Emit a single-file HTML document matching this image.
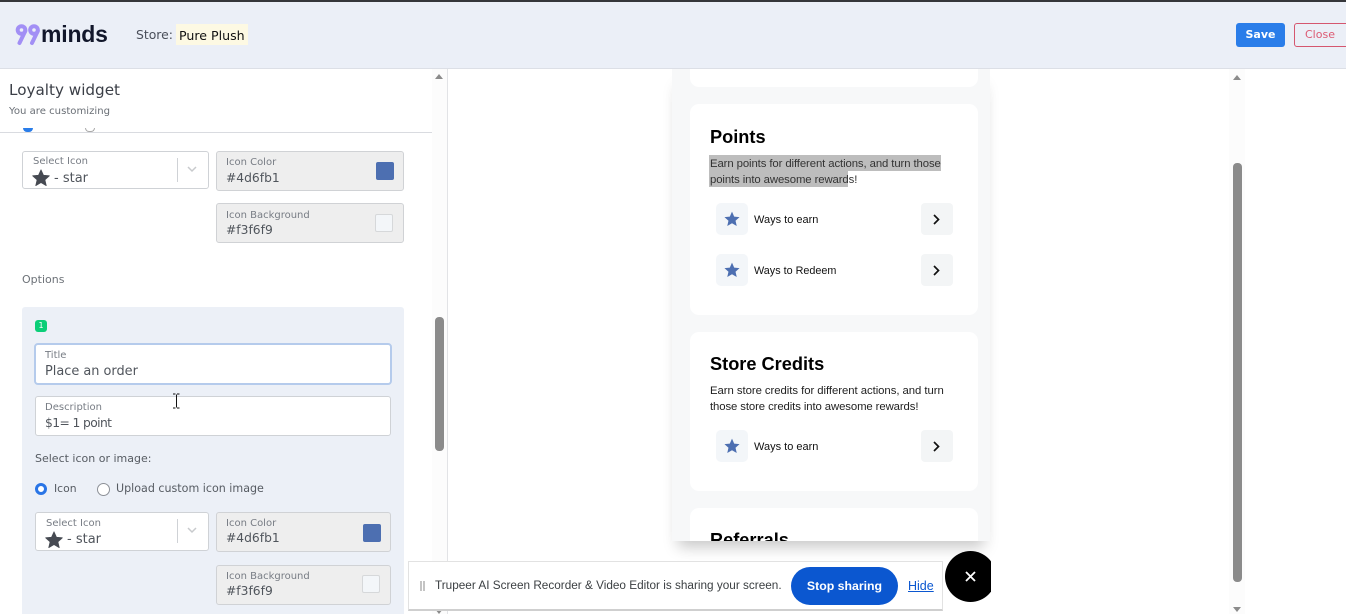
<!DOCTYPE html>
<html><head><meta charset="utf-8">
<style>
html,body{margin:0;padding:0;background:#fff}
body{width:1346px;height:614px;position:relative;overflow:hidden;font-family:"DejaVu Sans","Liberation Sans",sans-serif;color:#4a4f57}
.a{position:absolute;white-space:nowrap}
.box{position:absolute;box-sizing:border-box;border:1px solid #cfd2d6;border-radius:3px;background:#fff}
.gr{background:#eeeeee;border-color:#d0d2d5}
.lb{position:absolute;margin-top:1px;font-size:10px;line-height:12px;color:#777c84;white-space:nowrap;font-family:"DejaVu Sans",sans-serif}
.vl{position:absolute;margin-top:1px;font-size:12.3px;line-height:16px;color:#50555c;white-space:nowrap}
.sw{position:absolute;box-sizing:border-box;width:18px;height:18px;border-radius:2px}
.l{font-family:"Liberation Sans",sans-serif}
.card{position:absolute;left:690px;width:288px;background:#fff;border-radius:9px}
.ico{position:absolute;width:32px;height:32px;background:#f3f6f9;border-radius:5px}
.arr{position:absolute;width:32px;height:32px;background:#f3f5f6;border-radius:4px}
.pt{font-family:"Liberation Sans",sans-serif;color:#000;position:absolute;margin-top:1px;white-space:nowrap}
.h{font-size:18.200px;line-height:24px;font-weight:bold}
.d{font-size:11.350px;line-height:16px;letter-spacing:-.1px}
</style></head><body>
<!-- header -->
<div class="a" style="left:0;top:0;width:1346px;height:2px;background:#35363a"></div>
<div class="a" style="left:0;top:2px;width:1346px;height:66px;background:#ebeff7"></div>
<div class="a" style="left:0;top:68px;width:1346px;height:1px;background:#dcdfe6"></div>
<svg class="a" style="left:14px;top:23px" width="28" height="23" viewBox="0 0 28 23">
<g fill="none" stroke="#a28ff5" stroke-width="4" stroke-linecap="round"><circle cx="7.500" cy="7" r="3.800"/><path d="M11.300 8 L5.500 20"/><circle cx="20" cy="7" r="3.800"/><path d="M23.800 8 L18 20"/></g></svg>
<div class="a l" style="left:41px;top:18px;font-size:23px;line-height:32px;font-weight:bold;color:#12172b;letter-spacing:-.2px">minds</div>
<div class="a" style="left:136px;top:26px;font-size:12.400px;line-height:17px;color:#4a4f5a">Store:</div>
<div class="a" style="left:176px;top:24px;width:72px;height:21px;background:#fdf9e3"></div>
<div class="a" style="left:179px;top:27px;font-size:12.600px;line-height:17px;color:#111">Pure Plush</div>
<div class="a" style="left:1236px;top:23px;width:49px;height:24px;background:#2a7de9;border-radius:3px;color:#fff;font-size:11px;font-weight:bold;text-align:center;line-height:23px">Save</div>
<div class="a" style="left:1294px;top:23px;width:60px;height:24px;box-sizing:border-box;border:1px solid #d5566f;border-radius:3px;color:#dc5a73;font-size:11px;line-height:21px;padding-left:10px">Close</div>

<!-- left panel -->
<div class="a" style="left:23px;top:128px;width:10px;height:4px;background:#2a7de9;border-radius:0 0 6px 6px"></div>
<div class="a" style="left:85px;top:128px;width:10px;height:4px;box-sizing:border-box;border:1px solid #aaa;border-top:0;border-radius:0 0 6px 6px"></div>
<div class="a" style="left:0;top:132px;width:432px;height:1px;background:#d9dbe0"></div>
<div class="a" style="left:9px;top:80px;font-size:15.200px;line-height:20px;color:#3b3f47">Loyalty widget</div>
<div class="a" style="left:9px;top:104px;font-size:10.100px;line-height:16px;color:#6a6f76">You are customizing</div>

<div class="box" style="left:22px;top:151px;width:187px;height:38px"></div>
<div class="lb" style="left:33px;top:155px">Select Icon</div>
<svg class="a" style="left:32px;top:169px" width="18" height="17" viewBox="0 0 24 23"><path d="M12 1l3.300 7.400 8 .8-6 5.400 1.800 7.900L12 18.400 4.900 22.500l1.800-7.900-6-5.400 8-.8z" fill="#464a52" stroke="#464a52" stroke-linejoin="round"/></svg>
<div class="vl" style="left:54px;top:170px;font-size:13px">- star</div>
<div class="a" style="left:177px;top:158px;width:1px;height:24px;background:#cfd2d6"></div>
<svg class="a" style="left:187px;top:166px" width="10" height="7" viewBox="0 0 10 7"><path d="M1 1l4 4 4-4" fill="none" stroke="#c8cacd" stroke-width="1.500"/></svg>

<div class="box gr" style="left:216px;top:151px;width:188px;height:40px"></div>
<div class="lb" style="left:226px;top:156px">Icon Color</div>
<div class="vl" style="left:226px;top:169px">#4d6fb1</div>
<div class="sw" style="left:376px;top:162px;background:#4d6fb1"></div>
<div class="box gr" style="left:216px;top:203px;width:188px;height:40px"></div>
<div class="lb" style="left:226px;top:209px">Icon Background</div>
<div class="vl" style="left:226px;top:221px">#f3f6f9</div>
<div class="sw" style="left:375px;top:214px;background:#f3f6f9;border:1px solid #d6d8da"></div>

<div class="a" style="left:22px;top:272px;font-size:11px;line-height:15px;color:#6d7278">Options</div>

<div class="a" style="left:22px;top:307px;width:382px;height:307px;background:#ecf0f7;border-radius:3px 3px 0 0"></div>
<div class="a" style="left:35px;top:320px;width:12px;height:12px;background:#0bce78;border-radius:3px;color:#fff;font-size:8px;line-height:11px;text-align:center">1</div>

<div class="a" style="left:34px;top:343px;width:358px;height:42px;box-sizing:border-box;background:#fff;border:2px solid #b5cbec;border-radius:4px"></div>
<div class="lb" style="left:45px;top:349px">Title</div>
<div class="vl" style="left:45px;top:363px;font-size:12.900px">Place an order</div>
<div class="box" style="left:35px;top:396px;width:356px;height:40px"></div>
<div class="lb" style="left:45px;top:401px">Description</div>
<div class="vl" style="left:45px;top:414px;letter-spacing:-.6px">$1= 1 point</div>
<svg class="a" style="left:172px;top:393px" width="9" height="16" viewBox="0 0 9 16"><path d="M1 1h2.500M5 1h2.500M4.500 1.500v13M1 15h2.500M5 15h2.500" fill="none" stroke="#111" stroke-width="1"/></svg>

<div class="a" style="left:35px;top:451px;font-size:11px;line-height:15px;color:#565b62">Select icon or image:</div>
<div class="a" style="left:35px;top:483px;width:12px;height:12px;border-radius:50%;background:#fff;box-sizing:border-box;border:3.500px solid #2a75e6"></div>
<div class="a" style="left:54px;top:481px;font-size:10.800px;line-height:15px;color:#565b62">Icon</div>
<div class="a" style="left:97px;top:483px;width:13px;height:13px;border-radius:50%;background:#fff;box-sizing:border-box;border:1px solid #8c9097"></div>
<div class="a" style="left:116px;top:481px;font-size:11.100px;line-height:15px;color:#565b62">Upload custom icon image</div>

<div class="box" style="left:35px;top:512px;width:174px;height:39px"></div>
<div class="lb" style="left:46px;top:517px">Select Icon</div>
<svg class="a" style="left:45px;top:531px" width="18" height="17" viewBox="0 0 24 23"><path d="M12 1l3.300 7.400 8 .8-6 5.400 1.800 7.900L12 18.400 4.900 22.500l1.800-7.900-6-5.400 8-.8z" fill="#464a52" stroke="#464a52" stroke-linejoin="round"/></svg>
<div class="vl" style="left:67px;top:531px;font-size:13px">- star</div>
<div class="a" style="left:177px;top:519px;width:1px;height:24px;background:#cfd2d6"></div>
<svg class="a" style="left:187px;top:527px" width="10" height="7" viewBox="0 0 10 7"><path d="M1 1l4 4 4-4" fill="none" stroke="#c8cacd" stroke-width="1.500"/></svg>

<div class="box gr" style="left:216px;top:512px;width:175px;height:40px"></div>
<div class="lb" style="left:226px;top:517px">Icon Color</div>
<div class="vl" style="left:226px;top:529px">#4d6fb1</div>
<div class="sw" style="left:363px;top:524px;background:#4d6fb1"></div>
<div class="box gr" style="left:216px;top:565px;width:175px;height:40px"></div>
<div class="lb" style="left:226px;top:570px">Icon Background</div>
<div class="vl" style="left:226px;top:582px">#f3f6f9</div>
<div class="sw" style="left:362px;top:575px;background:#f3f6f9;border:1px solid #d6d8da"></div>

<!-- left scrollbar -->
<div class="a" style="left:432px;top:69px;width:15px;height:545px;background:#fcfcfc"></div>
<div class="a" style="left:447px;top:69px;width:1px;height:545px;background:#e2e3e6"></div>
<div class="a" style="left:435px;top:74px;width:0;height:0;border-left:4.500px solid transparent;border-right:4.500px solid transparent;border-bottom:5px solid #8b8b8b"></div>
<div class="a" style="left:435px;top:317px;width:9px;height:134px;background:#8b8b8b;border-radius:4px"></div>
<div class="a" style="left:435px;top:609px;width:0;height:0;border-left:4.500px solid transparent;border-right:4.500px solid transparent;border-top:5px solid #8b8b8b"></div>

<!-- preview -->
<div class="a" style="left:672px;top:69px;width:318px;height:472px;background:#f7f8f9;box-shadow:0 12px 14px -6px rgba(0,0,0,.22)"></div>
<div class="card" style="top:69px;height:18px;border-radius:0 0 9px 9px"></div>
<div class="card" style="top:104px;height:211px"></div>
<div class="pt h" style="left:710px;top:124px">Points</div>
<div class="a" style="left:709px;top:155px;width:232px;height:16px;background:#bdbdbd"></div>
<div class="a" style="left:709px;top:171px;width:139px;height:16px;background:#bdbdbd"></div>
<div class="pt d" style="left:710px;top:155px;color:#333">Earn points for different actions, and turn those</div>
<div class="pt d" style="left:710px;top:171px;color:#333">points into awesome rewards!</div>

<div class="ico" style="left:716px;top:203px"></div>
<div class="pt" style="left:754px;top:211px;font-size:11px;line-height:16px;color:#111">Ways to earn</div>
<div class="arr" style="left:921px;top:203px"></div>
<div class="ico" style="left:716px;top:254px"></div>
<div class="pt" style="left:754px;top:262px;font-size:10.800px;line-height:16px;color:#111">Ways to Redeem</div>
<div class="arr" style="left:921px;top:254px"></div>

<div class="card" style="top:332px;height:159px"></div>
<div class="pt h" style="left:710px;top:351px">Store Credits</div>
<div class="pt d" style="left:710px;top:382px;color:#222;letter-spacing:-.05px">Earn store credits for different actions, and turn</div>
<div class="pt d" style="left:710px;top:398px;color:#222">those store credits into awesome rewards!</div>
<div class="ico" style="left:716px;top:430px"></div>
<div class="pt" style="left:754px;top:438px;font-size:11px;line-height:16px;color:#111">Ways to earn</div>
<div class="arr" style="left:921px;top:430px"></div>

<div class="a" style="left:690px;top:508px;width:288px;height:33px;background:#fff;border-radius:9px 9px 0 0;overflow:hidden">
<div class="pt h" style="left:20px;top:19px">Referrals</div></div>

<svg class="a" style="left:724px;top:211px" width="16" height="16" viewBox="0 0 24 24"><path d="M12 1l3.300 7.400 8 .8-6 5.400 1.800 7.900L12 18.400 4.900 22.500l1.800-7.900-6-5.400 8-.8z" fill="#4d6fb1"/></svg>
<svg class="a" style="left:724px;top:262px" width="16" height="16" viewBox="0 0 24 24"><path d="M12 1l3.300 7.400 8 .8-6 5.400 1.800 7.900L12 18.400 4.900 22.500l1.800-7.900-6-5.400 8-.8z" fill="#4d6fb1"/></svg>
<svg class="a" style="left:724px;top:438px" width="16" height="16" viewBox="0 0 24 24"><path d="M12 1l3.300 7.400 8 .8-6 5.400 1.800 7.900L12 18.400 4.900 22.500l1.800-7.900-6-5.400 8-.8z" fill="#4d6fb1"/></svg>
<svg class="a" style="left:932px;top:214px" width="9" height="11" viewBox="0 0 9 11"><path d="M2 1l4.500 4.500L2 10" fill="none" stroke="#111" stroke-width="1.700"/></svg>
<svg class="a" style="left:932px;top:265px" width="9" height="11" viewBox="0 0 9 11"><path d="M2 1l4.500 4.500L2 10" fill="none" stroke="#111" stroke-width="1.700"/></svg>
<svg class="a" style="left:932px;top:441px" width="9" height="11" viewBox="0 0 9 11"><path d="M2 1l4.500 4.500L2 10" fill="none" stroke="#111" stroke-width="1.700"/></svg>

<!-- right scrollbar -->
<div class="a" style="left:1229px;top:69px;width:16px;height:545px;background:#fcfcfc"></div>
<div class="a" style="left:1233px;top:75px;width:0;height:0;border-left:4.500px solid transparent;border-right:4.500px solid transparent;border-bottom:5px solid #8b8b8b"></div>
<div class="a" style="left:1233px;top:163px;width:9px;height:419px;background:#8b8b8b;border-radius:4px"></div>
<div class="a" style="left:1233px;top:607px;width:0;height:0;border-left:4.500px solid transparent;border-right:4.500px solid transparent;border-top:5px solid #8b8b8b"></div>

<!-- sharing bar -->
<div class="a" style="left:408px;top:561px;width:535px;height:50px;box-sizing:border-box;background:#fff;border:1px solid #e2e2e2;border-bottom:2px solid #cfcfcf"></div>
<div class="a" style="left:420px;top:581px;width:2px;height:10px;background:#c4c4c4"></div>
<div class="a" style="left:423px;top:581px;width:2px;height:10px;background:#c4c4c4"></div>
<div class="a l" style="left:435px;top:578px;font-size:11.770px;line-height:16px;color:#3c4043">Trupeer AI Screen Recorder &amp; Video Editor is sharing your screen.</div>
<div class="a l" style="left:791px;top:567px;width:107px;height:38px;border-radius:19px;background:#0b57d0;color:#fff;font-size:12.300px;font-weight:bold;text-align:center;line-height:39px">Stop sharing</div>
<div class="a l" style="left:908px;top:578px;font-size:12.500px;line-height:16px;color:#0b57d0;text-decoration:underline">Hide</div>
<div class="a" style="left:941px;top:545px;width:50px;height:69px;overflow:hidden">
<div class="a" style="left:4px;top:6px;width:51px;height:51px;border-radius:50%;background:#000"></div>
<svg class="a" style="left:24px;top:26px" width="11" height="11" viewBox="0 0 11 11"><path d="M1 1l9 9M10 1l-9 9" stroke="#fff" stroke-width="1.800"/></svg>
</div>
</body></html>
